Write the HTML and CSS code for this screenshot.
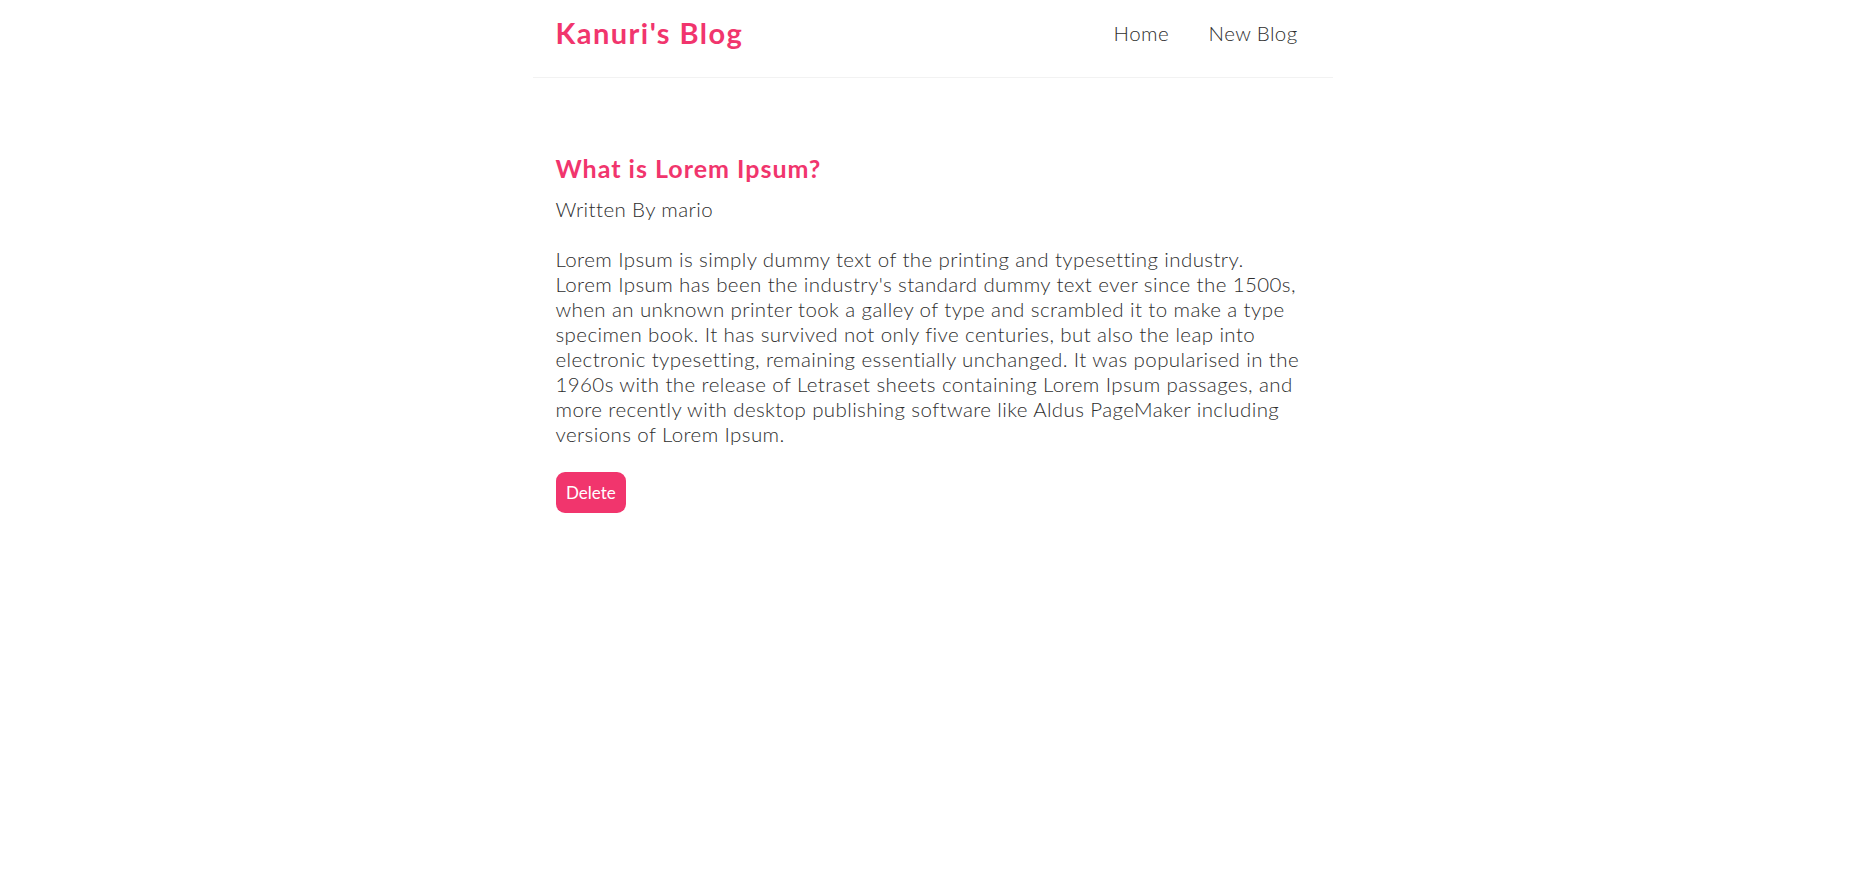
FILE: index.html
```html
<!DOCTYPE html>
<html lang="en">
<head>
<meta charset="utf-8">
<title>Kanuri's Blog</title>
<link rel="stylesheet" href="styles.css">
</head>
<body>
<div class="app">
  <nav class="navbar">
    <h1 class="brand">Kanuri's Blog</h1>
    <div class="links">
      <a href="#" class="link">Home</a>
      <a href="#" class="link">New Blog</a>
    </div>
  </nav>
  <main class="content">
    <article class="blog-details">
      <h2 class="blog-title">What is Lorem Ipsum?</h2>
      <p class="blog-author">Written By mario</p>
      <div class="blog-body">Lorem Ipsum is simply dummy text of the printing and typesetting industry. Lorem Ipsum has been the industry's standard dummy text ever since the 1500s, when an unknown printer took a galley of type and scrambled it to make a type specimen book. It has survived not only five centuries, but also the leap into electronic typesetting, remaining essentially unchanged. It was popularised in the 1960s with the release of Letraset sheets containing Lorem Ipsum passages, and more recently with desktop publishing software like Aldus PageMaker including versions of Lorem Ipsum.</div>
      <button class="delete-btn">Delete</button>
    </article>
  </main>
</div>
</body>
</html>
```
FILE: styles.css
```css
* {
  margin: 0;
  box-sizing: border-box;
}

body {
  margin: 0;
  background: #fff;
  color: #2e2e2e;
  font-family: "Lato", "Open Sans", sans-serif;
  font-weight: 300;
}

.navbar {
  display: flex;
  align-items: flex-start;
  max-width: 800px;
  margin: 0 auto;
  padding: 13px 20px 0;
  height: 78px;
  border-bottom: 1px solid #f2f2f2;
}

.brand {
  margin-top: 2px;
  color: #f1356d;
  font-size: 29px;
  font-weight: 700;
  letter-spacing: 1.45px;
  line-height: 36px;
  padding-left: 3px;
}

.links {
  margin-left: auto;
  margin-top: 8px;
  padding-right: 9px;
  font-size: 20.5px;
  line-height: 25px;
}

.link {
  margin-left: 22px;
  padding: 6px;
  color: #2e2e2e;
  text-decoration: none;
  font-size: 20.5px;
  letter-spacing: 0.4px;
}

.content {
  max-width: 800px;
  margin: 40px auto 0;
  padding: 35px 20px 20px 23px;
}

.blog-title {
  color: #f1356d;
  font-size: 25px;
  font-weight: 700;
  letter-spacing: 1px;
  line-height: 30px;
  margin-bottom: 14px;
}

.blog-author,
.blog-body {
  font-size: 20.5px;
  letter-spacing: 0.4px;
  line-height: 25px;
}

.blog-body {
  margin: 25px 0;
  max-width: 747px;
}

.delete-btn {
  background: #f1356d;
  color: #fff;
  border: 0;
  padding: 10px 10.5px;
  border-radius: 9px;
  font-family: "Lato", sans-serif;
  font-weight: 400;
  font-size: 17px;
  line-height: 21px;
  cursor: pointer;
}
```
